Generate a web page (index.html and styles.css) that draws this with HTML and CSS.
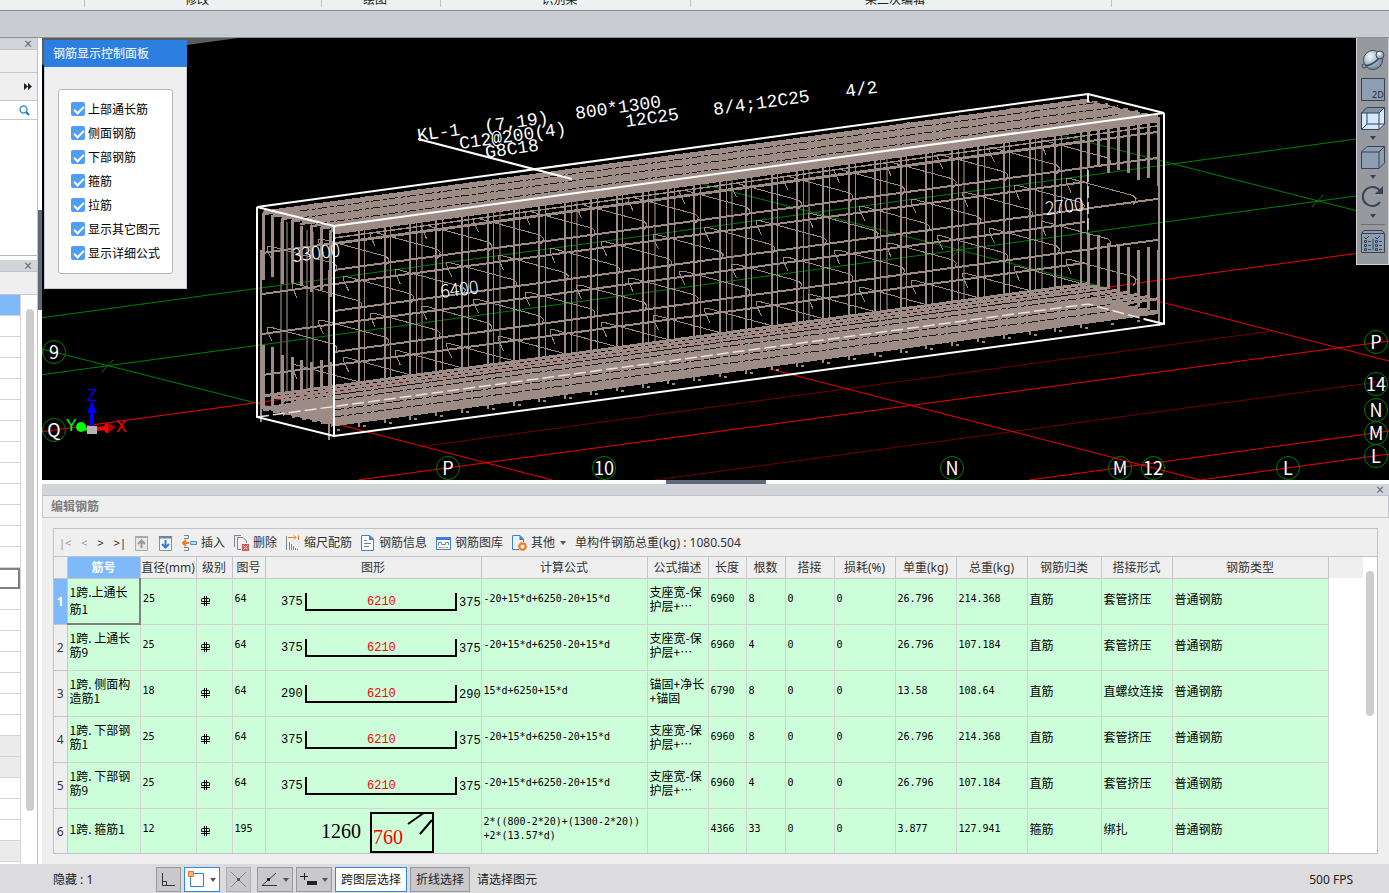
FILE: index.html
```
<!DOCTYPE html>
<html lang="zh-CN">
<head>
    <meta charset="UTF-8">
    <meta name="viewport" content="width=device-width, initial-scale=1.0">
    <title>编辑钢筋</title>
    <link rel="stylesheet" href="styles.css">
</head>
<body>
    <!-- shared symbols -->
    <svg class="defs" aria-hidden="true">
        <symbol id="grade" viewBox="0 0 9 10">
            <path d="M3.5 0V10M5.5 0V10M0 7.5H9M.5 3.5Q.5 2.5 1.500 2.500H7.500Q8.500 2.500 8.500 3.500V5.500H.5Z" fill="none" stroke="#000"/>
        </symbol>
        <symbol id="ushape" viewBox="0 0 216 45">
            <path d="M40 14V31H190V14" fill="none" stroke="#000" stroke-width="2"/>
        </symbol>
    </svg>

    <div class="ribbon">
        <div></div>
        <div>修改</div>
        <div>绘图</div>
        <div>识别梁</div>
        <div>梁二次编辑</div>
        <div></div>
    </div>
    <div class="strip"></div>

    <div class="main">
        <aside class="side">
            <div class="dock-bar"><button aria-label="关闭">×</button></div>
            <div class="side-head"></div>
            <div class="side-more">
                <svg width="8" height="7"><path d="M0 0L4 3.500L0 7ZM4 0L8 3.500L4 7Z" fill="#222"/></svg>
            </div>
            <div class="side-search">
                <svg width="11" height="11"><circle cx="4.500" cy="4.500" r="3.500" fill="none" stroke="#3d94cc" stroke-width="1.500"/><path d="M7 7L10 10" stroke="#2673b0" stroke-width="2"/></svg>
            </div>
            <div class="side-list"></div>
            <div class="side-gap"></div>
            <div class="dock-bar"><button aria-label="关闭">×</button></div>
            <div class="side-head"></div>
            <div class="side-grid">
                <ul>
                    <li class="on"></li><li></li><li></li><li></li><li></li><li></li><li></li><li></li><li></li>
                    <li></li><li></li><li></li><li></li><li class="cell"></li><li></li><li></li><li></li><li></li>
                    <li></li><li></li><li></li><li class="dim"></li><li class="dim"></li><li></li><li></li><li></li><li class="dim"></li>
                </ul>
                <div class="side-scroll"></div>
            </div>
        </aside>
        <div class="splitter"><span></span></div>

        <div class="work">
            <div class="view">
                <svg class="scene" viewBox="42 38 1347 442" preserveAspectRatio="xMinYMin slice">
                    <path d="M42 38H238L42 65Z" fill="#5c5c5c"/>
                    <g class="grid-green">
                        <path d="M42 317.700L1389 134.500"/>
                        <path d="M42 374.700L1389 191.500"/>
                        <path d="M42 349L256 403"/>
                        <path d="M702 184L1107 288"/>
                        <path d="M1060 135L1389 219"/>
                        <path d="M102 372L113 360M953 256L964 244M1312 207L1323 195"/>
                    </g>
                    <g class="grid-dark">
                        <path d="M422 446.500L1272 331"/>
                        <path d="M655 480L1389 380.500"/>
                    </g>
                    <g class="grid-red">
                        <path d="M42 431.700L1389 249"/>
                        <path d="M358 480L1389 341"/>
                        <path d="M1029 480L1389 431"/>
                        <path d="M1200 480L1389 454"/>
                        <path d="M256 403L552 480"/>
                        <path d="M770 369L1200 480"/>
                        <path d="M1107 288L1389 361"/>
                    </g>
                    <g id="cage"></g>
                    <path class="hidden-edge" d="M257 417L1088 304L1144 319"/>
                    <g class="outline">
                        <path d="M257 207L1088 94L1164 113L334 226Z"/>
                        <path d="M257 207V417L334 436V226M334 436L1164 324V113"/>
                        <path d="M1088 94V102M1144 319L1164 324"/>
                    </g>
                    <path class="hidden-edge" d="M1088 170V230"/>
                    <g class="dims">
                        <text x="293" y="262" transform="rotate(-7 293 262)">33000</text>
                        <text x="441" y="298" transform="rotate(-7 441 298)">6400</text>
                        <text x="1046" y="215" transform="rotate(-7 1046 215)">2700</text>
                    </g>
                    <g class="mark">
                        <path d="M418 139L572 179"/>
                        <text transform="translate(418 141) rotate(-8)">KL-1</text>
                        <text transform="translate(485 132) rotate(-8)">(7,19)</text>
                        <text transform="translate(576 119) rotate(-8)">800*1300</text>
                        <text transform="translate(460 149) rotate(-8)">C12@200(4)</text>
                        <text transform="translate(626 127) rotate(-8)">12C25</text>
                        <text transform="translate(714 115) rotate(-8)">8/4;12C25</text>
                        <text transform="translate(846 97) rotate(-8)">4/2</text>
                        <text transform="translate(486 158) rotate(-8)">G8C18</text>
                    </g>
                    <g id="bubbles"></g>
                    <g class="axes">
                        <path d="M92 428V406" stroke="#00f" stroke-width="4"/>
                        <path d="M92 401L97 413H87Z" fill="#00f"/>
                        <path d="M94 429L108 428" stroke="#f00" stroke-width="4"/>
                        <ellipse cx="107" cy="428" rx="3" ry="5" fill="#f00"/>
                        <path d="M108 423L116 427L108 433Z" fill="#a00"/>
                        <path d="M90 429H82" stroke="#0f0" stroke-width="3"/>
                        <circle cx="81" cy="427" r="5" fill="#0f0"/>
                        <path d="M87 426H97V434H87Z" fill="#b4b4b4"/>
                        <text x="87" y="401" fill="#00f">Z</text>
                        <text x="66" y="431" fill="#0f0">Y</text>
                        <text x="116" y="432" fill="#f00">X</text>
                    </g>
                </svg>

                <form class="panel">
                    <h2>钢筋显示控制面板</h2>
                    <div class="checks">
                        <label><input type="checkbox" checked>上部通长筋</label>
                        <label><input type="checkbox" checked>侧面钢筋</label>
                        <label><input type="checkbox" checked>下部钢筋</label>
                        <label><input type="checkbox" checked>箍筋</label>
                        <label><input type="checkbox" checked>拉筋</label>
                        <label><input type="checkbox" checked>显示其它图元</label>
                        <label><input type="checkbox" checked>显示详细公式</label>
                    </div>
                </form>

                <div class="tools">
                    <button aria-label="动态观察">
                        <svg width="24" height="23">
                            <defs><radialGradient id="ball" cx=".35" cy=".3" r=".8"><stop offset="0" stop-color="#f4f8fc"/><stop offset=".5" stop-color="#a9bccd"/><stop offset="1" stop-color="#66788b"/></radialGradient></defs>
                            <circle cx="12" cy="11" r="9.500" fill="url(#ball)" stroke="#3c4a5b"/>
                            <path d="M3 17C10 17 18 11 20 6" fill="none" stroke="#3c4a5b" stroke-width="1.500"/>
                            <circle cx="19" cy="6" r="4" fill="url(#ball)" stroke="#3c4a5b"/>
                            <circle cx="3" cy="17" r="2" fill="#8e9bab" stroke="#3c4a5b"/>
                        </svg>
                    </button>
                    <button aria-label="二维">
                        <svg width="24" height="23"><path d="M.5.5H23.500V22.500H.5Z" fill="#8d9db2" stroke="#364355"/><text x="11" y="20" class="t2d">2D</text></svg>
                    </button>
                    <button aria-label="线框">
                        <svg width="24" height="23"><path d="M.5 6L6 .5H23.500V17L18 22.500H.5Z" fill="#d4e8fd" stroke="#364355"/><path d="M.5 6L6 .5H23.500L18 6Z" fill="#8493a8" stroke="#364355"/><path d="M18 6V22.500M6 6V17H18M6 17L.5 22.500M18 17L23.500 17" fill="none" stroke="#364355"/></svg>
                        <i></i>
                    </button>
                    <button aria-label="实体">
                        <svg width="24" height="23"><path d="M.5 6L6 .5H23.500V17L18 22.500H.5Z" fill="#8d9db2" stroke="#364355"/><path d="M.5 6H18L23.500 .5M18 6V22.500" fill="none" stroke="#364355"/></svg>
                        <i></i>
                    </button>
                    <button aria-label="旋转">
                        <svg width="24" height="23"><path d="M19 17A9.500 9.500 0 1 1 19 6" fill="none" stroke="#364355" stroke-width="2"/><path d="M22 1V9H14Z" fill="#364355"/></svg>
                        <i></i>
                    </button>
                    <hr>
                    <button aria-label="显示设置">
                        <svg width="24" height="23"><path d="M.5 3.500L3 .5H21L23.500 3.500V22.500H.5Z" fill="#8d9db2" stroke="#364355"/><path d="M.5 3.500H23.500M12 9V20M3 7L5 9L8 6M14 7L16 9L19 6" fill="none" stroke="#364355"/><path d="M3.500 10.500H5.500V12.500H3.500ZM3.500 14.500H5.500V16.500H3.500ZM3.500 18.500H5.500V20.500H3.500ZM14.500 10.500H16.500V12.500H14.500ZM14.500 14.500H16.500V16.500H14.500ZM14.500 18.500H16.500V20.500H14.500ZM7 11.500H10M7 15.500H10M7 19.500H10M18 11.500H21M18 15.500H21M18 19.500H21" fill="none" stroke="#364355"/></svg>
                    </button>
                </div>
            </div>

            <div class="h-splitter"><span></span></div>

            <section class="editor">
                <div class="dock-bar"><button aria-label="关闭">×</button></div>
                <h2>编辑钢筋</h2>
                <div class="box">
                    <div class="bar">
                        <div class="nav">
                            <button disabled>|&lt;</button>
                            <button disabled>&lt;</button>
                            <button>&gt;</button>
                            <button>&gt;|</button>
                        </div>
                        <button disabled aria-label="上移">
                            <svg width="13" height="15"><path d="M.5.5H12.500V14.500H.5Z" fill="#e8e8e8" stroke="#aaa"/><path d="M0 1H13" stroke="#aaa" stroke-width="2"/><path d="M6.500 12V5M3 8L6.500 4.500L10 8" fill="none" stroke="#999" stroke-width="2"/></svg>
                        </button>
                        <button class="down" aria-label="下移">
                            <svg width="13" height="15"><path d="M.5.5H12.500V14.500H.5Z" fill="#f4f8fc" stroke="#7d93a8"/><path d="M0 1H13" stroke="#71848f" stroke-width="3"/><path d="M6.500 4V11M3 8L6.500 11.500L10 8" fill="none" stroke="#2f7fd6" stroke-width="2"/></svg>
                        </button>
                        <button>
                            <svg width="15" height="16"><path d="M2 .5H6.500V3.500H2M2 15.500H6.500V12.500H2" fill="none" stroke="#76858f"/><path d="M7 8H2M4 5L1 8L4 11" fill="none" stroke="#f07b22" stroke-width="2"/><path d="M8.500 6.500H14.500V9.500H8.500Z" fill="#bcdcff" stroke="#4a90d9"/></svg>
                            插入
                        </button>
                        <button>
                            <svg width="15" height="16"><path d="M.5 12V.5H7M3.500 14.500V2.500H9L12.500 6V8M3.500 14.500H7" fill="none" stroke="#76858f"/><path d="M8 9H15V16H8Z" fill="#d9534f"/><path d="M9.500 10.500L13.500 14.500M13.500 10.500L9.500 14.500" stroke="#fff"/></svg>
                            删除
                        </button>
                        <button>
                            <svg width="14" height="16"><path d="M.5 1V15M3.500 7V15M5.500 9V15M7.500 11V15M9.500 13V15M11.500 14V15" stroke="#76858f"/><path d="M2 2.500H10M8 .5L10 2.500L8 4.500M12.500 .5V5" fill="none" stroke="#f07b22"/></svg>
                            缩尺配筋
                        </button>
                        <button>
                            <svg width="14" height="16"><path d="M.5.5H9L12.500 4V15.500H.5Z" fill="#fff" stroke="#3b82d0"/><path d="M8 0L13 5H8Z" fill="#3b82d0"/><path d="M3 5.500H6M3 8.500H10M3 11.500H8" stroke="#67839c"/></svg>
                            钢筋信息
                        </button>
                        <button>
                            <svg width="15" height="13"><path d="M.5.5H14.500V12.500H.5Z" fill="#fff" stroke="#3b82d0"/><path d="M0 1.500H15" stroke="#3b82d0" stroke-width="3"/><path d="M2.500 8.500V5.500H5.500V7.500H9.500V5.500H12.500V8" fill="none" stroke="#76858f"/><path d="M3 10.500H5" stroke="#e74c3c"/><path d="M6 10.500H9" stroke="#f0b622"/><path d="M10 10.500H12" stroke="#4cb050"/></svg>
                            钢筋图库
                        </button>
                        <button>
                            <svg width="15" height="16"><path d="M7 14.500H.5V.5H8L11.500 4V7" fill="none" stroke="#3b82d0"/><path d="M7.500 0L12 5H7.500Z" fill="#3b82d0"/><circle cx="10.500" cy="11.500" r="3" fill="#fff" stroke="#f07b22" stroke-width="2"/><circle cx="10.500" cy="11.500" r="4" fill="none" stroke="#f07b22" stroke-dasharray="2 2"/></svg>
                            其他
                            <i></i>
                        </button>
                        <span>单构件钢筋总重(kg) : 1080.504</span>
                    </div>
                    <div class="rows">
                        <table>
                            <colgroup>
                                <col class="w-no"><col class="w-name"><col class="w-dia"><col class="w-lv"><col class="w-fig"><col class="w-shape"><col class="w-calc"><col class="w-desc"><col class="w-len"><col class="w-num"><col class="w-lap"><col class="w-kg"><col class="w-kg"><col class="w-sum"><col class="w-type"><col class="w-sum"><col class="w-kind">
                            </colgroup>
                            <thead>
                                <tr><th></th><th class="on">筋号</th><th>直径(mm)</th><th>级别</th><th>图号</th><th>图形</th><th>计算公式</th><th>公式描述</th><th>长度</th><th>根数</th><th>搭接</th><th>损耗(%)</th><th>单重(kg)</th><th>总重(kg)</th><th>钢筋归类</th><th>搭接形式</th><th>钢筋类型</th></tr>
                            </thead>
                            <tbody>
                                <tr>
                                    <th class="on">1</th><td class="name current">1跨.上通长<br>筋1</td><td>25</td><td><svg width="9" height="10"><use href="#grade"/></svg></td><td>64</td>
                                    <td class="shape"><svg width="216" height="45"><use href="#ushape"/><text x="15" y="26">375</text><text x="101" y="26" class="red">6210</text><text x="193" y="27">375</text></svg></td>
                                    <td>-20+15*d+6250-20+15*d</td><td class="zh">支座宽-保<br>护层+…</td><td>6960</td><td>8</td><td>0</td><td>0</td><td>26.796</td><td>214.368</td><td class="zh">直筋</td><td class="zh">套管挤压</td><td class="zh">普通钢筋</td>
                                </tr>
                                <tr>
                                    <th>2</th><td class="name">1跨. 上通长<br>筋9</td><td>25</td><td><svg width="9" height="10"><use href="#grade"/></svg></td><td>64</td>
                                    <td class="shape"><svg width="216" height="45"><use href="#ushape"/><text x="15" y="26">375</text><text x="101" y="26" class="red">6210</text><text x="193" y="27">375</text></svg></td>
                                    <td>-20+15*d+6250-20+15*d</td><td class="zh">支座宽-保<br>护层+…</td><td>6960</td><td>4</td><td>0</td><td>0</td><td>26.796</td><td>107.184</td><td class="zh">直筋</td><td class="zh">套管挤压</td><td class="zh">普通钢筋</td>
                                </tr>
                                <tr>
                                    <th>3</th><td class="name">1跨. 侧面构<br>造筋1</td><td>18</td><td><svg width="9" height="10"><use href="#grade"/></svg></td><td>64</td>
                                    <td class="shape"><svg width="216" height="45"><use href="#ushape"/><text x="15" y="26">290</text><text x="101" y="26" class="red">6210</text><text x="193" y="27">290</text></svg></td>
                                    <td>15*d+6250+15*d</td><td class="zh">锚固+净长<br>+锚固</td><td>6790</td><td>8</td><td>0</td><td>0</td><td>13.58</td><td>108.64</td><td class="zh">直筋</td><td class="zh">直螺纹连接</td><td class="zh">普通钢筋</td>
                                </tr>
                                <tr>
                                    <th>4</th><td class="name">1跨. 下部钢<br>筋1</td><td>25</td><td><svg width="9" height="10"><use href="#grade"/></svg></td><td>64</td>
                                    <td class="shape"><svg width="216" height="45"><use href="#ushape"/><text x="15" y="26">375</text><text x="101" y="26" class="red">6210</text><text x="193" y="27">375</text></svg></td>
                                    <td>-20+15*d+6250-20+15*d</td><td class="zh">支座宽-保<br>护层+…</td><td>6960</td><td>8</td><td>0</td><td>0</td><td>26.796</td><td>214.368</td><td class="zh">直筋</td><td class="zh">套管挤压</td><td class="zh">普通钢筋</td>
                                </tr>
                                <tr>
                                    <th>5</th><td class="name">1跨. 下部钢<br>筋9</td><td>25</td><td><svg width="9" height="10"><use href="#grade"/></svg></td><td>64</td>
                                    <td class="shape"><svg width="216" height="45"><use href="#ushape"/><text x="15" y="26">375</text><text x="101" y="26" class="red">6210</text><text x="193" y="27">375</text></svg></td>
                                    <td>-20+15*d+6250-20+15*d</td><td class="zh">支座宽-保<br>护层+…</td><td>6960</td><td>4</td><td>0</td><td>0</td><td>26.796</td><td>107.184</td><td class="zh">直筋</td><td class="zh">套管挤压</td><td class="zh">普通钢筋</td>
                                </tr>
                                <tr>
                                    <th>6</th><td class="name">1跨. 箍筋1</td><td>12</td><td><svg width="9" height="10"><use href="#grade"/></svg></td><td>195</td>
                                    <td class="shape big"><svg width="216" height="45"><path d="M105 4H167V43H105ZM142 15L157 4.500M154 25L166 11" fill="none" stroke="#000" stroke-width="2"/><text x="55" y="29">1260</text><text x="107" y="35" class="red">760</text></svg></td>
                                    <td>2*((800-2*20)+(1300-2*20))<br>+2*(13.57*d)</td><td></td><td>4366</td><td>33</td><td>0</td><td>0</td><td>3.877</td><td>127.941</td><td class="zh">箍筋</td><td class="zh">绑扎</td><td class="zh">普通钢筋</td>
                                </tr>
                            </tbody>
                        </table>
                        <div class="rest"></div>
                        <div class="scroll"><span></span></div>
                    </div>
                </div>
            </section>
        </div>
    </div>

    <footer>
        <span class="hide-count">隐藏 : 1</span>
        <button aria-label="正交"><svg width="15" height="15"><path d="M1.500 1V13.500H14M1.500 9.500H5.500V13.500" fill="none" stroke="#333"/></svg></button>
        <button class="drop on" aria-label="捕捉"><svg width="17" height="17"><path d="M2.500 2.500H15.500V15.500H2.500Z" fill="#fff" stroke="#2f7fd6"/><path d="M.5.5H5.500V5.500H.5Z" fill="#ffb27a" stroke="#e8702a"/></svg><i></i></button>
        <button class="off" aria-label="交点"><svg width="17" height="17"><path d="M1 1L16 16M16 1L1 16" stroke="#888"/><path d="M7 7H10V10H7Z" fill="#555"/></svg></button>
        <button class="drop" aria-label="角度"><svg width="17" height="15"><path d="M15 1L1 13.500H16" fill="none" stroke="#333"/><path d="M6 6H9V9H6Z" fill="#222"/></svg><i></i></button>
        <button class="drop" aria-label="动态输入"><svg width="17" height="15"><path d="M0 4.500H8M4.500 1V8" stroke="#222"/><path d="M7 9H17V13H7Z" fill="#222"/></svg><i></i></button>
        <button class="word on">跨图层选择</button>
        <button class="word">折线选择</button>
        <span>请选择图元</span>
        <span class="fps">500 FPS</span>
    </footer>
    <script src="script.js"></script>
</body>
</html>
```
FILE: styles.css
```
* {
    box-sizing: border-box;
}
body {
    margin: 0;
    height: 100vh;
    display: flex;
    flex-direction: column;
    overflow: hidden;
    background: white;
    color: #333;
    font-family: "Noto Sans", "Noto Sans CJK SC", sans-serif;
    font-size: 12px;
    line-height: 16px;
}
button {
    display: flex;
    align-items: center;
    margin: 0;
    padding: 0;
    border: none;
    background: none;
    color: inherit;
    font: inherit;
    white-space: nowrap;
}
h2 {
    margin: 0;
    font-size: 12px;
    font-weight: normal;
}
.defs {
    position: absolute;
    width: 0;
    height: 0;
}

/* drop-down arrow */
button i {
    border: 3px solid transparent;
    border-top: 4px solid #555;
    border-bottom: 0;
}

.ribbon {
    display: grid;
    grid-template-columns: 85px 237px 119px 250px 421px 1fr;
    height: 11px;
    overflow: hidden;
    background: #edf1f1;
    border-bottom: 1px solid #8c9094;
    color: #222;
}
.ribbon div {
    display: flex;
    align-items: flex-end;
    justify-content: center;
    height: 7px;
    padding: 0 12px 0 0;
    line-height: 14px;
    border-right: 1px solid #c0c3c5;
}
.ribbon div:last-child {
    border: none;
}
.strip {
    height: 27px;
    flex: none;
    background: #c9cdd1;
    border-bottom: 1px solid #8c9094;
}
.main {
    display: flex;
    flex: 1;
    min-height: 0;
}

.dock-bar {
    display: flex;
    justify-content: flex-end;
    align-items: center;
    height: 12px;
    flex: none;
    padding-right: 5px;
    background: #d3d4da;
    border-bottom: 1px solid #c0c2c7;
}
.dock-bar button {
    color: #666;
    font-size: 14px;
    line-height: 10px;
}

.side {
    display: flex;
    flex-direction: column;
    width: 38px;
    border-right: 1px solid #c0c2c7;
    background: white;
}
.side-head {
    height: 23px;
    flex: none;
    background: #efefef;
    border-bottom: 1px solid #c4c6cb;
}
.side-more, .side-search {
    display: flex;
    align-items: center;
    justify-content: flex-end;
    height: 28px;
    flex: none;
    padding-right: 5px;
    background: #efefef;
    border-bottom: 1px solid #c4c6cb;
}
.side-search {
    height: 19px;
    padding-right: 7px;
    background: white;
}
.side-list {
    height: 136px;
    flex: none;
    border-bottom: 1px solid #b4b6ba;
}
.side-gap {
    height: 4px;
    flex: none;
}
.side-grid {
    display: flex;
    flex: 1;
    min-height: 0;
    overflow: hidden;
}
.side-grid ul {
    width: 21px;
    margin: 0;
    padding: 0;
    list-style: none;
    border-right: 1px solid #d4d4d4;
}
.side-grid li {
    height: 21px;
    border-bottom: 1px solid #d4d4d4;
}
.side-grid .on {
    background: #80b9fa;
}
.side-grid .dim {
    background: #ebebeb;
}
.side-grid .cell {
    border: 2px solid #808080;
    border-left: none;
}
.side-scroll {
    width: 8px;
    height: 502px;
    margin: 14px 0 0 5px;
    border-radius: 4px;
    background: #cdcdcd;
}
.splitter {
    width: 4px;
    padding-top: 172px;
}
.splitter span {
    display: block;
    height: 100px;
    background: #5f6b78;
}

.work {
    display: flex;
    flex-direction: column;
    flex: 1;
    min-width: 0;
}
.view {
    position: relative;
    flex: 1;
    min-height: 0;
    background: black;
    overflow: hidden;
}
.scene {
    display: block;
    width: 100%;
    height: 100%;
}
.grid-green path {
    stroke: #008000;
}
.grid-red path {
    stroke: #f00000;
}
.grid-dark path {
    stroke: #700000;
}
.outline path {
    fill: none;
    stroke: white;
    stroke-width: 2;
}
.hidden-edge {
    fill: none;
    stroke: #e8e4e2;
    stroke-width: 1.5;
    stroke-dasharray: 12 4;
}
#cage {
    shape-rendering: crispEdges;
}
.dims text {
    fill: white;
    font-family: "Noto Sans CJK SC", sans-serif;
    font-size: 18px;
    font-weight: 300;
}
.mark path {
    stroke: white;
    stroke-width: 2;
}
.mark text {
    fill: white;
    font-family: "Liberation Mono", monospace;
    font-size: 18px;
}
.bubble circle {
    fill: none;
    stroke: #008000;
}
.bubble text {
    fill: white;
    font-family: "Noto Sans CJK SC", sans-serif;
    font-size: 18px;
    text-anchor: middle;
}
.axes text {
    font-family: "Liberation Sans", sans-serif;
    font-size: 16px;
}
.steel {
    fill: none;
    stroke: #9c8c85;
}
.steel-back {
    fill: none;
    stroke: #594f4b;
}
.gap-line {
    fill: none;
    stroke: #1a1716;
}

.panel {
    position: absolute;
    left: 2px;
    top: 2px;
    width: 143px;
    padding-bottom: 14px;
    background: #efefef;
    border: 1px solid #c3cbd8;
    border-top: none;
    color: black;
}
.panel h2 {
    margin: 0 -1px 22px;
    padding: 6px 9px 5px;
    background: #2c7fe0;
    color: white;
}
.checks {
    margin: 0 13px;
    padding: 8px 12px 7px;
    background: white;
    border: 1px solid #b5b5b5;
    border-radius: 3px;
}
.checks label {
    display: flex;
    align-items: center;
    gap: 3px;
    height: 24px;
    white-space: nowrap;
}
.checks input {
    position: relative;
    appearance: none;
    width: 14px;
    height: 14px;
    margin: 0 0 2px;
    border-radius: 2px;
    background: #4f9ff8;
}
.checks input:checked::after {
    content: "";
    position: absolute;
    left: 5px;
    top: 2px;
    width: 4px;
    height: 8px;
    border: solid white;
    border-width: 0 2px 2px 0;
    transform: rotate(45deg);
}

.tools {
    position: absolute;
    right: 0;
    top: 0;
    width: 33px;
    height: 227px;
    padding-top: 11px;
    display: flex;
    flex-direction: column;
    align-items: center;
    background: #96999d;
    border: 1px solid #cfd1d3;
    border-top: none;
}
.tools button {
    flex-direction: column;
    margin-bottom: 6px;
}
.tools button i {
    margin: 6px 0 0;
    border-width: 4px 3px 0;
    border-top-color: #364355;
}
.tools hr {
    width: 24px;
    margin: 0 0 5px;
    border: none;
    border-top: 1px solid #6d6d6d;
}
.t2d {
    font-size: 9px;
    fill: #222e3d;
}

.h-splitter {
    display: flex;
    justify-content: center;
    height: 4px;
    flex: none;
}
.h-splitter span {
    width: 100px;
    height: 4px;
    background: #5f6b78;
}

.editor {
    background: #efefef;
    padding-bottom: 10px;
}
.editor h2 {
    padding: 3px 8px 2px;
    color: #7d7d7d;
    font-weight: bold;
    border: 1px solid #c4c6cb;
    border-top: none;
}
.box {
    margin: 10px 11px 0;
    border: 1px solid #c0c2c7;
}
.bar {
    display: flex;
    align-items: center;
    gap: 9px;
    height: 28px;
    padding: 1px 0 0 5px;
    border-bottom: 1px solid #c0c2c7;
}
.bar button {
    gap: 4px;
}
.bar .down {
    margin: 0 1px 0 2px;
}
.bar button i {
    margin-left: 1px;
}
.nav {
    display: flex;
    justify-content: space-between;
    width: 67px;
    color: #222;
    font-size: 11px;
}
.nav button:disabled {
    color: #999;
}
.rows {
    display: flex;
    background: white;
    height: 296px;
    overflow: hidden;
}
table {
    width: 1274px;
    flex: none;
    table-layout: fixed;
    border-collapse: collapse;
    border-spacing: 0;
}
.w-no { width: 13px; }
.w-name { width: 73px; }
.w-dia { width: 56px; }
.w-lv { width: 36px; }
.w-fig { width: 33px; }
.w-shape { width: 216px; }
.w-calc { width: 166px; }
.w-desc { width: 61px; }
.w-len { width: 38px; }
.w-num { width: 39px; }
.w-lap { width: 49px; }
.w-kg { width: 61px; }
.w-sum { width: 71px; }
.w-type { width: 74px; }
.w-kind { width: 156px; }
th {
    padding: 0;
    background: #efefef;
    border-right: 1px solid #c4c6cb;
    border-bottom: 1px solid #c4c6cb;
    font-weight: normal;
    text-align: center;
    white-space: nowrap;
}
thead th {
    height: 21px;
    padding-top: 2px;
}
th.on {
    background: #80b9fa;
    color: white;
    font-weight: bold;
}
tbody th {
    padding-top: 2px;
}
tbody tr {
    height: 46px;
}
td {
    padding: 0 0 4px 2px;
    background: #ccffd9;
    border-right: 1px solid #d3d3d3;
    border-bottom: 1px solid #d3d3d3;
    color: black;
    font-family: "DejaVu Sans Mono", monospace;
    font-size: 10px;
    line-height: 14px;
    white-space: nowrap;
}
td svg {
    display: block;
    margin: 4px 0 0 2px;
}
td.zh, td.name {
    font-family: "Noto Sans CJK SC", sans-serif;
    font-size: 12px;
}
td.current {
    padding-bottom: 2px;
    border-right: 2px solid #808080;
    border-bottom: 2px solid #808080;
    line-height: 17px;
}
td.shape {
    padding: 0;
}
td.shape svg {
    margin: 0;
}
td.shape text {
    font-family: "Liberation Mono", monospace;
    font-size: 12px;
}
td.big text {
    font-family: "Liberation Serif", serif;
    font-size: 20px;
}
td.shape .red {
    fill: red;
}
.rest {
    width: 34px;
    height: 21px;
    background: #efefef;
}
.scroll {
    margin-left: auto;
    padding: 14px 3px 0 0;
}
.scroll span {
    display: block;
    width: 8px;
    height: 145px;
    border-radius: 4px;
    background: #cdcdcd;
}

footer {
    display: flex;
    align-items: center;
    gap: 3px;
    height: 29px;
    flex: none;
    padding: 2px 0 0 53px;
    background: #dcdcdf;
    color: #222;
}
footer button {
    justify-content: center;
    gap: 5px;
    width: 25px;
    height: 25px;
    background: #c9c9cc;
    border: 1px solid #98989c;
}
footer .drop {
    width: 36px;
}
footer .word {
    width: auto;
    padding: 0 5px;
}
footer button.on {
    background: white;
    border-color: #2c8be8;
}
footer button.off {
    margin: 0 3px;
    border-color: #b0b0b3;
}
footer span {
    margin-left: 4px;
}
footer .hide-count {
    width: 100px;
    margin-left: 0;
}
footer .fps {
    margin-left: auto;
    padding-right: 36px;
}
```
FILE: script.js
```
const NS = 'http://www.w3.org/2000/svg';
const SLOPE = 113 / 830;   // fall of the long edges
const STEP = 25.8;         // stirrup spacing

const cage = document.getElementById('cage');

function path(d, cls, width, dash) {
    const p = document.createElementNS(NS, 'path');
    p.setAttribute('d', d);
    p.setAttribute('class', cls);
    p.setAttribute('stroke-width', width);
    if (dash) p.setAttribute('stroke-dasharray', dash);
    cage.appendChild(p);
}

// y on a long line that passes through (x0, y0)
function along(x, x0, y0) {
    return y0 - (x - x0) * SLOPE;
}
function longBar(x1, y1, x2, cls, width, dash) {
    path(`M${x1} ${y1}L${x2} ${along(x2, x1, y1)}`, cls, width, dash);
}

// stirrup legs
let far = '', back = '', front = '', knots = '';
for (let k = 0; k < 32; k++) {
    const xf = 333 + k * STEP;
    const xt = 288 + k * STEP;
    if (k > 0 && xf < 1085) {
        front += `M${xf} ${along(xf, 334, 230)}V${along(xf, 334, 430)}`;
        back += `M${xf + 6} ${along(xf + 6, 257, 214)}V${along(xf + 6, 257, 410)}`;
        if (k % 3 === 0) far += `M${xf + 12} ${along(xf + 12, 257, 214)}V${along(xf + 12, 257, 410)}`;
    }
    // bumps where the stirrups go round the outer bars
    if (xt < 1085) knots += `M${xt} ${along(xt, 257, 212)}h3`;
    knots += `M${xf + 4} ${along(xf + 4, 334, 430)}h3`;
}
path(far, 'steel-back', 2);
path(back, 'steel', 1);
path(front, 'steel', 2);
path('M281 222V400M287 222V402M307 230V408M313 232V408', 'steel-back', 2);

// side bars, far face then near face
[253, 294, 334, 375].forEach(y => longBar(262, y, 1085, 'steel', 2));
[270, 311, 352].forEach(y => longBar(334, y, 1160, 'steel', 2));

// ties with their hooks
[[267, 253], [292, 294], [267, 334], [292, 375]].forEach(([x0, y0]) => {
    let d = '';
    for (let x = x0; x < 1082; x += STEP * 2) {
        const y = along(x, 262, y0);
        d += `M${x + 5} ${y + 8}L${x} ${y - 3}V${y - 6}H${x + 4}L${x + 67} ${y + 11}l3 3l-1 4l-2 2`;
    }
    path(d, 'steel', 1);
});

// top and bottom bars, bent at both ends
const topEnds = [[280, 168], [277, 165], [284, 173], [283, 170], [285, 173], [292, 180], [290, 178], [297, 186]];
const lowEnds = [[345, 233], [347, 235], [355, 243], [357, 246], [360, 247], [362, 250], [360, 247], [362, 250]];
for (let i = 0; i < 8; i++) {
    const x = 263 + i * 9.7;
    const xr = 1088 + i * 10;
    const yt = 213 + i * 2.4;
    const yb = 409 + i * 2.2;
    longBar(x, yt, xr, 'steel', 4.6);
    longBar(x, yb, xr, 'steel', 4.6);
    longBar(x, yb - 13, xr, 'steel', 3);
    path(`M${x} ${yt}V${topEnds[i][0]}M${xr} ${along(xr, x, yt)}V${topEnds[i][1]}`, 'steel', 3);
    path(`M${x} ${lowEnds[i][0]}V${yb}M${xr} ${lowEnds[i][1]}V${along(xr, x, yb)}`, 'steel', 3);
}
longBar(334, 232, 1160, 'steel', 5);
longBar(334, 238, 1160, 'steel', 1.5);
longBar(334, 244, 1160, 'steel', 2);

// dark gaps between the bars
[211, 218, 226].forEach(y => longBar(300, y, 1120, 'gap-line', 1, '9 3 4 2'));
[395, 400, 410, 417].forEach(y => longBar(334, y, 1110, 'gap-line', 1, '10 3 5 2'));
path(knots, 'steel', 2);
path('M261 250V422M329 270V440M1159 180V326', 'steel', 2);

// axis bubbles
const bubbles = [
    ['9', 54, 352], ['Q', 54, 430], ['P', 448, 468], ['10', 604, 468], ['N', 952, 468],
    ['M', 1120, 468], ['12', 1153, 468], ['L', 1288, 468], ['P', 1376, 342], ['14', 1376, 384],
    ['N', 1376, 410], ['M', 1376, 433], ['L', 1376, 456]
];
document.getElementById('bubbles').innerHTML = bubbles.map(([name, x, y]) =>
    `<g class="bubble"><circle cx="${x}" cy="${y}" r="11.5"/><text x="${x}" y="${y + 7}">${name}</text></g>`
).join('');
```
